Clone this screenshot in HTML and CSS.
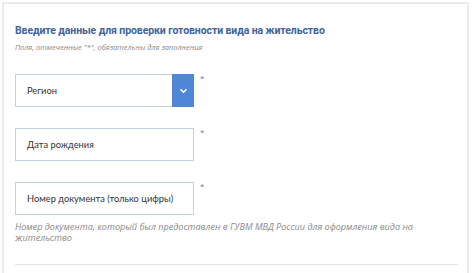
FILE: index.html
```html
<!DOCTYPE html>
<html lang="ru">
<head>
<meta charset="utf-8">
<link rel="stylesheet" href="styles.css">
</head>
<body>
<div class="card">
  <h1 class="title">Введите данные для проверки готовности вида на жительство</h1>
  <p class="note">Поля, отмеченные "*", обязательны для заполнения</p>
  <div class="field">
    <div class="select">
      <span class="select-text">Регион</span>
      <span class="select-btn">
        <svg width="9" height="6" viewBox="0 0 9 6"><path d="M1.5 1.2 L4.5 4.2 L7.5 1.2" fill="none" stroke="#fff" stroke-width="1.6"/></svg>
      </span>
    </div>
    <span class="req">*</span>
  </div>
  <div class="field">
    <div class="input">Дата рождения</div>
    <span class="req">*</span>
  </div>
  <div class="field">
    <div class="input">Номер документа (только цифры)</div>
    <span class="req">*</span>
  </div>
  <p class="help">Номер документа, который был предоставлен в ГУВМ МВД России для оформления вида на жительство</p>
  <div class="divider"></div>
</div>
</body>
</html>
```
FILE: styles.css
```css
html, body { margin: 0; padding: 0; background: #fff; }
body { padding: 2px 0 0 2px; width: 467px; }
.card {
  border: 2px solid #ececec;
  border-bottom: none;
  height: 271px;
  box-sizing: border-box;
  padding: 20px 0 0 11px;
  font-family: "Open Sans", sans-serif;
}
.title {
  margin: 0;
  font-family: Roboto, sans-serif;
  font-size: 10.5px;
  font-weight: 700;
  color: #41639a;
  line-height: 14px;
  letter-spacing: -0.1px;
}
.note {
  margin: 3px 0 0;
  font-size: 7.5px;
  font-style: italic;
  color: #888;
  line-height: 12px;
}
.field {
  display: flex;
  align-items: flex-start;
  margin-top: 21px;
  height: 33px;
}
.field:first-of-type { margin-top: 21px; }
.select, .input {
  width: 179px;
  height: 33px;
  box-sizing: border-box;
  border: 1px solid #c4d0e2;
  display: flex;
  align-items: center;
  font-family: Lato, sans-serif;
  font-size: 9.3px;
  color: #333;
}
.input { padding-left: 11px; }
.select-text { flex: 1; padding-left: 11px; }
.select-btn {
  width: 22px;
  align-self: stretch;
  margin: -1px -1px -1px 0;
  background: #4f86d6;
  display: flex;
  align-items: center;
  justify-content: center;
}
.req { font-size: 8px; color: #777; margin-left: 6px; line-height: 8px; }
.help {
  margin: 6px 0 0;
  width: 430px;
  font-size: 9.1px;
  font-style: italic;
  color: #8a8a8a;
  line-height: 11px;
}
.divider {
  margin-top: 21px;
  width: 443px;
  height: 1px;
  background: #e4e4e4;
}
```
